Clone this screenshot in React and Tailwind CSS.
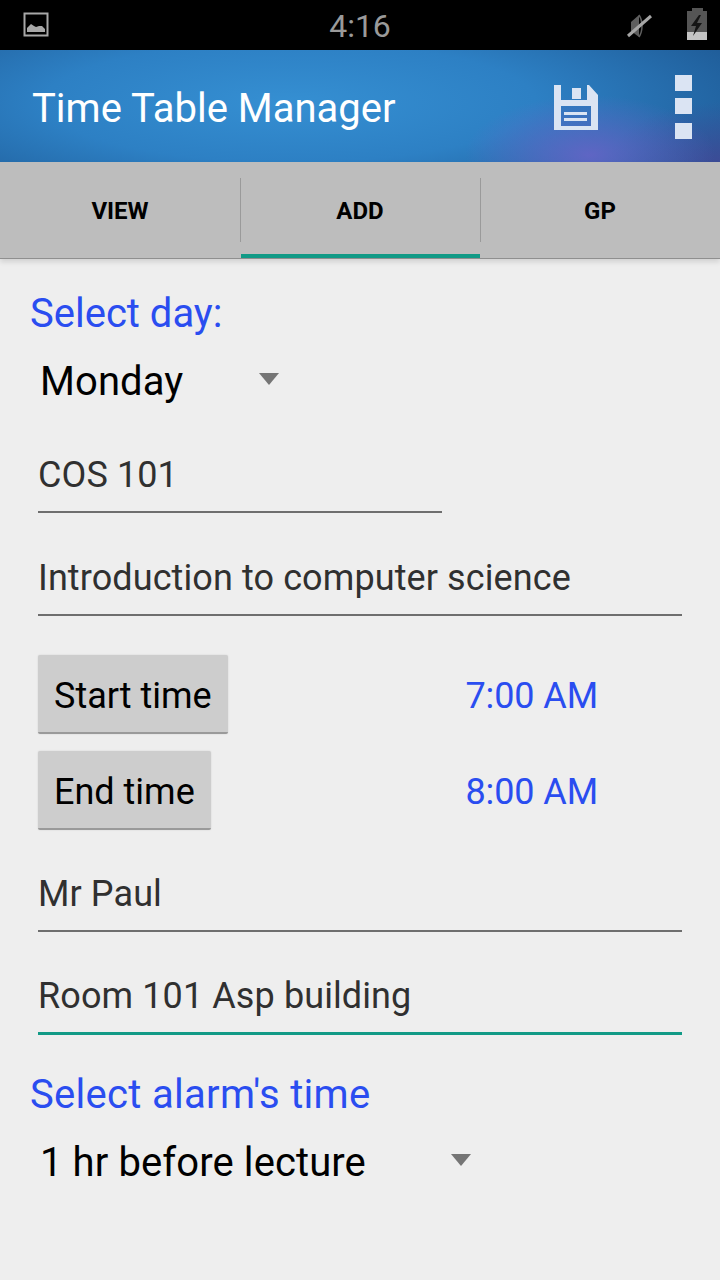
import React from "react";

const roboto = "font-['Roboto',sans-serif]";

function PictureIcon() {
  return (
    <svg width="26" height="26" viewBox="0 0 26 26" className="text-[#a8a8a8]">
      <rect x="1.5" y="1.5" width="23" height="22" fill="none" stroke="currentColor" strokeWidth="2" />
      <path d="M4 20v-4l4-4 3 2 2 1 3-1 3 0 3 3v3z" fill="currentColor" />
    </svg>
  );
}

function MuteIcon() {
  return (
    <svg width="28" height="30" viewBox="0 0 28 30">
      <path d="M6 11l8-7v22l-8-6z" fill="#5e5e5e" />
      <path d="M14 4c4 6 4 16 0 22" fill="none" stroke="#5e5e5e" strokeWidth="1.5" />
      <path d="M3 25L26 5" stroke="#a6a6a6" strokeWidth="3" />
    </svg>
  );
}

function BatteryIcon() {
  return (
    <svg width="20" height="32" viewBox="0 0 20 32">
      <path d="M5 0h11v3h4v29H0V3h5z" fill="#555555" />
      <rect x="0" y="24" width="20" height="8" fill="#c4c4c4" />
      <path d="M12 7L4 18h5l-3 10 9-13h-5l4-8z" fill="#151515" />
    </svg>
  );
}

function SaveIcon() {
  return (
    <svg width="44" height="45" viewBox="0 0 44 45" className="text-[#dbe4f3]">
      <path
        fillRule="evenodd"
        d="M0 0h7v15h26V0h2l9 10v35H0zM7 21v20h30V21zM18 3h9v11h-9z"
        fill="currentColor"
      />
      <rect x="10" y="27" width="23" height="3" fill="currentColor" />
      <rect x="10" y="33" width="23" height="3" fill="currentColor" />
    </svg>
  );
}

function Tab({ label, active, divider }) {
  return (
    <div className="relative flex flex-1 items-center justify-center">
      <span className={`${roboto} mt-[2px] text-[24px] font-bold text-black`}>{label}</span>
      {divider ? <div className="absolute -right-px top-4 h-16 w-px bg-[#9a9a9a]" /> : null}
      {active ? <div className="absolute bottom-0 left-px right-0 h-[4px] bg-[#119a86]" /> : null}
    </div>
  );
}

function Field({ value, className = "", lineClass = "h-[2px] bg-[#6e6e6e]" }) {
  return (
    <div className={className}>
      <div className="h-[46px] text-[36px] leading-[46px] tracking-[0.1px] text-[#303030]">{value}</div>
      <div className={`mt-[13px] ${lineClass}`} />
    </div>
  );
}

function Spinner({ value, width }) {
  return (
    <div className="flex h-[46px] items-center justify-between pl-[40px] text-[40px] tracking-[0.1px] text-black" style={{ width }}>
      <span>{value}</span>
      <span className="mb-[6px] h-0 w-0 border-x-[10px] border-t-[12px] border-x-transparent border-t-[#757575]" />
    </div>
  );
}

function TimeRow({ label, time, className = "" }) {
  return (
    <div className={`flex h-[80px] items-center pl-[38px] ${className}`}>
      <button className="flex h-[79px] items-center rounded-[2px] border-b-2 border-[#9a9a9a] bg-[#cdcdcd] px-4 pt-[5px] text-[36px] text-black shadow-[0_0_2px_rgba(0,0,0,0.12)]">
        {label}
      </button>
      <span className="ml-auto mr-[122px] mt-[4px] text-[36px] tracking-[-0.1px] text-[#2a4df0]">{time}</span>
    </div>
  );
}

export default function App() {
  return (
    <div className={`${roboto} flex h-[1280px] w-[720px] flex-col overflow-hidden bg-[#eeeeee]`}>
      <div className="relative flex h-[50px] shrink-0 items-center justify-center bg-black">
        <div className="absolute left-[23px] top-[12px]">
          <PictureIcon />
        </div>
        <span className="mt-[2px] text-[32px] font-normal text-[#9a9a9a]">4:16</span>
        <div className="absolute left-[625px] top-[11px]">
          <MuteIcon />
        </div>
        <div className="absolute left-[687px] top-[8px]">
          <BatteryIcon />
        </div>
      </div>

      <div className="flex h-[112px] shrink-0 items-center bg-[#1f5b9b] bg-[radial-gradient(ellipse_125px_60px_at_590px_105px,rgba(105,100,200,0.85),transparent),radial-gradient(ellipse_110px_60px_at_720px_112px,rgba(70,70,150,0.75),transparent),radial-gradient(ellipse_490px_120px_at_290px_52px,#358fd2_0%,#2d80c4_50%,#1f5c98_100%)] pl-[32px] pr-[28px]">
        <span className="mt-[6px] text-[40px] text-white">Time Table Manager</span>
        <div className="ml-auto mr-[77px] mt-[2px]">
          <SaveIcon />
        </div>
        <div className="mt-[2px] flex flex-col">
          <div className="h-4 w-[17px] bg-[#dbe4f3]" />
          <div className="mt-[7px] h-4 w-[17px] bg-[#dbe4f3]" />
          <div className="mt-[9px] h-4 w-[17px] bg-[#dbe4f3]" />
        </div>
      </div>

      <div className="flex h-[97px] shrink-0 border-b border-[#8f8f8f] bg-[#bdbdbd] shadow-[0_3px_5px_rgba(0,0,0,0.12)]">
        <Tab label="VIEW" divider />
        <Tab label="ADD" active divider />
        <Tab label="GP" />
      </div>

      <div className="mt-[32px] pl-[30px] text-[40px] leading-[46px] text-[#2a4df0]">Select day:</div>
      <div className="mt-[22px]">
        <Spinner value="Monday" width={279} />
      </div>

      <Field value="COS 101" className="ml-[38px] mt-[47px] w-[404px]" />
      <Field value="Introduction to computer science" className="ml-[38px] mt-[42px] w-[644px]" />

      <TimeRow label="Start time" time="7:00 AM" className="mt-[38px]" />
      <TimeRow label="End time" time="8:00 AM" className="mt-[16px]" />

      <Field value="Mr Paul" className="ml-[38px] mt-[41px] w-[644px]" />
      <Field
        value="Room 101 Asp building"
        className="ml-[38px] mt-[41px] w-[644px]"
        lineClass="h-[3px] bg-[#119a86]"
      />

      <div className="mt-[37px] pl-[30px] text-[40px] leading-[46px] tracking-[0.3px] text-[#2a4df0]">Select alarm's time</div>
      <div className="mt-[22px]">
        <Spinner value="1 hr before lecture" width={471} />
      </div>
    </div>
  );
}
